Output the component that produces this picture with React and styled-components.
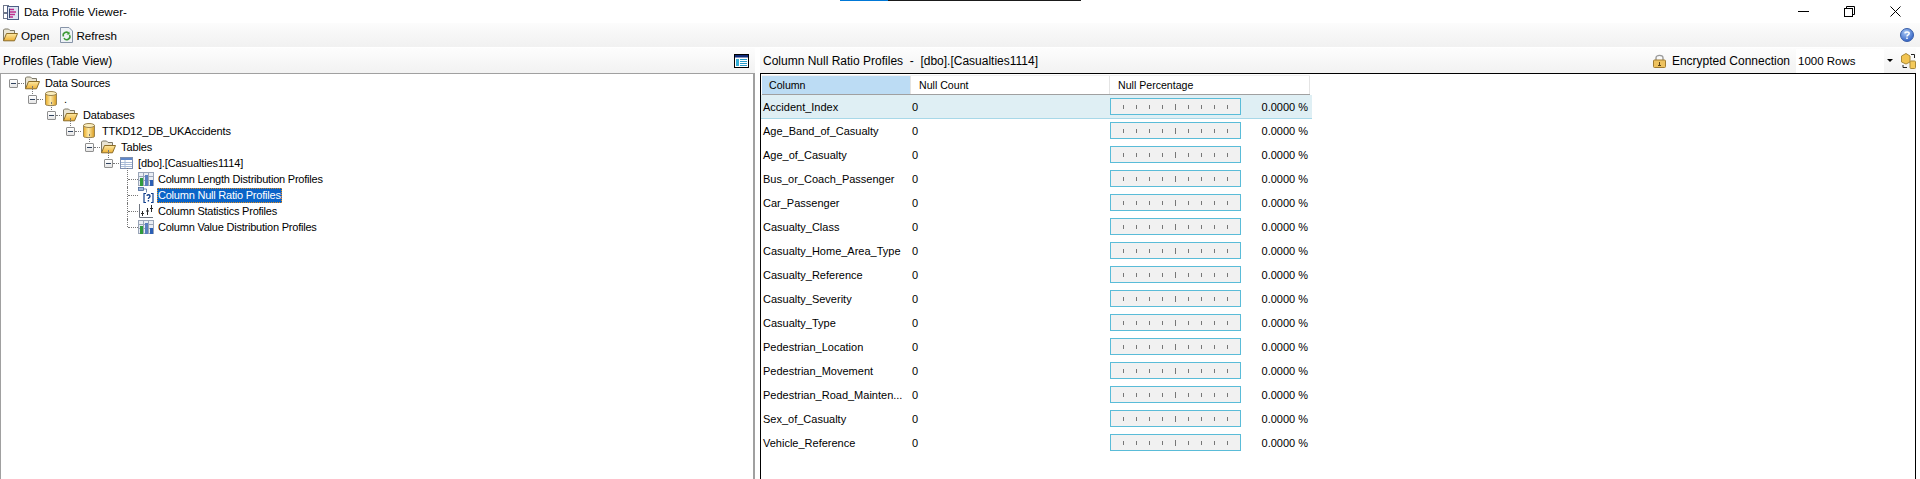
import React from "react";
import styled, { createGlobalStyle } from "styled-components";

const Global = createGlobalStyle`
  html, body { margin: 0; padding: 0; background: #fff; }
  body { font-family: "Liberation Sans", Arial, sans-serif; font-size: 11px; color: #000; }
`;

const Page = styled.div`
  position: relative;
  display: flex;
  flex-direction: column;
  height: 479px;
  width: 1920px;
  overflow: hidden;
  background: #fff;
`;
const LoadBar = styled.div`
  position: absolute;
  top: 0;
  left: 840px;
  width: 241px;
  height: 1px;
  background: linear-gradient(to right, #0078d7 48px, #1a1a1a 48px);
`;
const TitleBar = styled.div`
  height: 23px;
  display: flex;
  align-items: center;
  padding: 0 19px 0 3px;
  background: #fff;
  font-size: 11.6px;
`;
const TitleText = styled.span`
  margin-left: 5px;
  flex: 1;
`;
const WinButtons = styled.div`
  display: flex;
  align-items: center;
  gap: 35px;
`;
const Toolbar = styled.div`
  height: 24px;
  margin-bottom: 1px;
  display: flex;
  align-items: center;
  padding: 0 6px 0 2px;
  background: linear-gradient(to bottom, #fcfcfc, #f1f1f1);
`;
const ToolButton = styled.div`
  display: flex;
  align-items: center;
  gap: ${p => p.$gap}px;
  margin-right: 11px;
  font-size: 11.6px;
`;
const Spacer = styled.div`flex: 1;`;
const Panes = styled.div`
  flex: 1;
  display: flex;
  min-height: 0;
  background: #fff;
`;
const LeftPane = styled.div`
  width: 755px;
  display: flex;
  flex-direction: column;
`;
const Splitter = styled.div`
  width: 5px;
  background: #fff;
`;
const RightPane = styled.div`
  width: 1156px;
  display: flex;
  flex-direction: column;
`;
const PaneHeader = styled.div`
  height: 25px;
  flex: none;
  display: flex;
  align-items: center;
  padding: ${p => p.$pad || "0 6px 0 3px"};
  background: linear-gradient(to bottom, #fdfdfd, #f2f2f2);
  font-size: 12px;
  box-sizing: border-box;
`;
const TreeBox = styled.div`
  flex: 1;
  border-top: 1px solid #a0a0a0;
  border-left: 1px solid #a0a0a0;
  border-right: 2px solid #a0a0a0;
  padding-top: 1px;
  background: #fff;
`;
const TreeRow = styled.div`
  position: relative;
  height: 16px;
  display: flex;
  align-items: center;
  font-size: 11px;
  letter-spacing: ${p => (p.$leaf ? "-0.22px" : "-0.12px")};
  white-space: nowrap;
  padding-left: ${p => p.$left}px;
`;
const Expander = styled.span`
  position: relative;
  width: 9px;
  height: 9px;
  box-sizing: border-box;
  border: 1px solid #8f8f8f;
  border-radius: 1px;
  background: linear-gradient(to bottom, #fff, #e6e6e6);
  flex: none;
  margin-right: 6px;
  &::after {
    content: "";
    position: absolute;
    left: 1px;
    right: 1px;
    top: 3px;
    height: 1px;
    background: #30435f;
  }
`;
const HLink = styled.span`
  position: absolute;
  top: 8px;
  left: ${p => p.$left}px;
  width: ${p => p.$width}px;
  border-top: 1px dotted #777;
`;
const VLink = styled.span`
  position: absolute;
  top: ${p => p.$top}px;
  left: ${p => p.$left}px;
  height: ${p => p.$height}px;
  border-left: 1px dotted #777;
`;
const NodeIcon = styled.span`
  display: flex;
  flex: none;
  align-items: center;
  justify-content: center;
  width: 16px;
  margin-right: ${p => p.$gap}px;
`;
const NodeLabel = styled.span`
  padding: 0 1px;
  height: 15px;
  line-height: 15px;
  box-sizing: border-box;
  ${p => p.$selected && `
    background: #0a64c8;
    color: #fff;
    outline: 1px dotted #e08a1e;
    outline-offset: -1px;
  `}
`;
const HeaderIconWrap = styled.div`
  margin-left: auto;
  display: flex;
`;
const RightTitle = styled.span`
  flex: 1;
  white-space: pre;
`;
const Encrypted = styled.span`
  margin: 0 6px 0 6px;
`;
const Combo = styled.div`
  width: 88px;
  height: 24px;
  background: #fff;
  display: flex;
  align-items: center;
  padding-left: 2px;
  box-sizing: border-box;
  font-size: 11.5px;
`;
const ComboArrow = styled.div`
  width: 12px;
  height: 24px;
  display: flex;
  align-items: center;
  justify-content: center;
  margin-right: 5px;
  &::after {
    content: "";
    border-left: 3px solid transparent;
    border-right: 3px solid transparent;
    border-top: 3px solid #000;
  }
`;
const GridBox = styled.div`
  flex: 1;
  border-top: 1px solid #000;
  border-left: 1px solid #000;
  border-right: 1px solid #000;
  padding-top: 1px;
  background: #fff;
`;
const HeaderRow = styled.div`
  display: flex;
  height: 20px;
  width: 548px;
  margin-left: 1px;
  box-sizing: border-box;
  border-bottom: 1px solid #a0a0a0;
  border-top: 1px solid #f0f0f0;
  font-size: 10.6px;
`;
const HeaderCell = styled.div`
  width: ${p => p.$width}px;
  box-sizing: border-box;
  display: flex;
  align-items: center;
  padding-left: ${p => p.$pad}px;
  border-right: 1px solid #e4e4e4;
  background: ${p => (p.$active ? "#bcdcf4" : "#fff")};
`;
const DataRow = styled.div`
  display: flex;
  align-items: center;
  height: 24px;
  width: 551px;
  box-sizing: border-box;
  font-size: 11px;
  background: ${p => (p.$active ? "#dfeff4" : "#fff")};
  border-bottom: 1px solid ${p => (p.$active ? "#a8d8e8" : "transparent")};
`;
const NameCell = styled.div`
  width: 151px;
  padding-left: 2px;
  box-sizing: border-box;
  overflow: hidden;
  white-space: nowrap;
`;
const CountCell = styled.div`
  width: 198px;
`;
const ProgressBar = styled.div`
  width: 131px;
  height: 17px;
  box-sizing: border-box;
  border: 1px solid #5abcd8;
  background: #f1f1f1;
  display: flex;
  align-items: center;
  justify-content: space-between;
  padding: 0 12px;
`;
const Tick = styled.span`
  width: 1px;
  height: ${p => (p.$tall ? 6 : 4)}px;
  background: #777;
`;
const Pct = styled.div`
  width: 67px;
  text-align: right;
`;

/* ---------- icons ---------- */
const FolderOpen = () => (
  <svg width="16" height="14" viewBox="0 0 16 14">
    <defs>
      <linearGradient id="fld" x1="0" x2="0" y1="0" y2="1">
        <stop offset="0" stopColor="#fde9a4" />
        <stop offset="1" stopColor="#eeb032" />
      </linearGradient>
    </defs>
    <path d="M1.5 12.5V2L2.5 1H6.5L8 2.5H12.5V5" fill="#e9e4d2" stroke="#7c7868" />
    <path d="M1.5 12.8L4.5 5.5H15.5L12.5 12.8Z" fill="url(#fld)" stroke="#8b6c28" />
  </svg>
);
const Cylinder = () => (
  <svg width="12" height="16" viewBox="0 0 12 16">
    <defs>
      <linearGradient id="cyl" x1="0" x2="1" y1="0" y2="0">
        <stop offset="0" stopColor="#e8a922" />
        <stop offset=".45" stopColor="#fde9a8" />
        <stop offset="1" stopColor="#d89a1c" />
      </linearGradient>
    </defs>
    <path d="M.5 2.5V13.5C.5 15 11.5 15 11.5 13.5V2.5Z" fill="url(#cyl)" stroke="#9a8350" />
    <ellipse cx="6" cy="2.5" rx="5.5" ry="2" fill="#fbeebd" stroke="#9a8350" />
  </svg>
);
const TableIcon = () => (
  <svg width="16" height="13" viewBox="0 0 16 13">
    <rect x="1.5" y=".5" width="12" height="11" fill="#fff" stroke="#7d8fb0" />
    <rect x="2" y="1" width="11" height="2" fill="#5f86c8" />
    <path d="M2 5.5H13M2 7.5H13M2 9.5H13M6 3V11" stroke="#a9bcd8" />
  </svg>
);
const ChartIcon = () => (
  <svg width="16" height="14" viewBox="0 0 16 14">
    <rect x=".5" y=".5" width="15" height="13" fill="#e9edf4" stroke="#9aa5b8" />
    <path d="M.5 4.5H15.5M.5 8.5H15.5M5.5 .5V13.5M10.5 .5V13.5" stroke="#9aa5b8" />
    <rect x="2" y="6" width="3" height="8" fill="#2f9a3c" />
    <rect x="7" y="3" width="3" height="11" fill="#5a7fc0" />
    <rect x="12" y="8" width="3" height="6" fill="#2b5fb5" />
  </svg>
);
const NullIcon = () => (
  <svg width="16" height="16" viewBox="0 0 16 16">
    <rect x="0.5" y="0.5" width="5" height="3" fill="#9db7dc" stroke="#49689a" strokeWidth=".8" />
    <path d="M5.5 2H8.5V5.5" stroke="#49689a" fill="none" strokeWidth=".8" />
    <path d="M8 6.5H6V15.5H8M13 6.5H15V15.5H13" stroke="#123f8c" fill="none" strokeWidth="1.2" />
    <path d="M8.8 8.8C9.2 7.4 12 7.4 12 9.2C12 10.6 10.4 10.4 10.4 12M10.4 13V14.6" stroke="#123f8c" fill="none" strokeWidth="1.4" />
  </svg>
);
const StatsIcon = () => (
  <svg width="16" height="16" viewBox="0 0 16 16">
    <path d="M1.5 1V14.5H15" stroke="#6f7580" fill="none" />
    <path d="M4.5 8V13M3 10.5H6M9.5 5V12M8 8H11M13.5 2V9M12 5.5H15" stroke="#2b2b2b" fill="none" />
  </svg>
);
const AppIcon = () => (
  <svg width="16" height="16" viewBox="0 0 16 16">
    <rect x=".5" y="1.5" width="5" height="7" fill="#fff" stroke="#70788c" />
    <rect x=".5" y="9.5" width="4" height="5" fill="#fff" stroke="#70788c" />
    <rect x="4.5" y="2.5" width="11" height="13" fill="#dfe6f4" stroke="#4e5f86" />
    <path d="M7 5.5H11M7 8H13M7 10.5H12M7 13H10" stroke="#c02c8c" strokeWidth="1.4" />
    <path d="M6.5 4.5V14" stroke="#3a4a70" />
  </svg>
);
const RefreshIcon = () => (
  <svg width="13" height="16" viewBox="0 0 13 16">
    <path d="M.5 .5H9L12.5 4V15.5H.5Z" fill="#eef2f6" stroke="#8794a8" />
    <path d="M3.5 9.5A3 3 0 0 1 9 7M9.5 8A3 3 0 0 1 4 11" stroke="#3d9a36" fill="none" strokeWidth="1.5" />
    <path d="M9.5 4.5V7.5H6.5" fill="#3d9a36" />
  </svg>
);
const MinIcon = () => (
  <svg width="11" height="11" viewBox="0 0 11 11">
    <path d="M0 5.5H11" stroke="#000" />
  </svg>
);
const RestoreIcon = () => (
  <svg width="11" height="11" viewBox="0 0 11 11">
    <rect x=".5" y="2.5" width="8" height="8" fill="#fff" stroke="#000" />
    <path d="M2.5 2.5V.5H10.5V8.5H8.5" stroke="#000" fill="none" />
  </svg>
);
const CloseIcon = () => (
  <svg width="11" height="11" viewBox="0 0 11 11">
    <path d="M.5 .5L10.5 10.5M10.5 .5L.5 10.5" stroke="#000" />
  </svg>
);
const HelpIcon = () => (
  <svg width="14" height="14" viewBox="0 0 14 14">
    <defs>
      <radialGradient id="hlp" cx=".4" cy=".3" r=".8">
        <stop offset="0" stopColor="#a8c8f4" />
        <stop offset="1" stopColor="#2456c0" />
      </radialGradient>
    </defs>
    <circle cx="7" cy="7" r="6.5" fill="url(#hlp)" stroke="#3a5fa8" />
    <path d="M4.8 5.4C5 3.4 9.2 3.4 9.2 5.5C9.2 7 7 6.8 7 8.6M7 9.6V11" stroke="#fff" fill="none" strokeWidth="1.5" />
  </svg>
);
const LockIcon = () => (
  <svg width="13" height="14" viewBox="0 0 13 14">
    <path d="M3 6.5V4C3 .5 10 .5 10 4V6.5" stroke="#9a9a9a" fill="none" strokeWidth="1.4" />
    <rect x=".5" y="6" width="12" height="7.5" rx="1" fill="#eec25e" stroke="#a07c32" />
    <path d="M6.5 8V11.5M5 11.5H8" stroke="#5c4313" />
  </svg>
);
const LayoutIcon = () => (
  <svg width="15" height="14" viewBox="0 0 15 14">
    <rect x=".5" y=".5" width="14" height="13" fill="#fff" stroke="#000" />
    <rect x="1" y="1" width="13" height="2.5" fill="#0f2a78" />
    <rect x="2" y="5" width="3" height="7" fill="#35b0d8" />
    <path d="M6 5.5H13M6 7.5H13M6 9.5H13M6 11.5H13" stroke="#2a9cc8" />
  </svg>
);
const TransferIcon = () => (
  <svg width="15" height="16" viewBox="0 0 15 16">
    <path d="M.5 3L5 .5L9 3V9L5 11L.5 9Z" fill="#f2c450" stroke="#a98a3a" />
    <rect x="9" y="8" width="5.5" height="7.5" rx="1" fill="#f4ca5c" stroke="#a98a3a" />
    <path d="M10 1.5H13.5V5M2 12V14.5H6" stroke="#222" fill="none" />
  </svg>
);

/* ---------- data ---------- */
const treeNodes = [
  { label: "Data Sources", exp: 8, icon: <FolderOpen />, gap: 4 },
  { label: ".", exp: 27, icon: <Cylinder />, gap: 4, line: 31 },
  { label: "Databases", exp: 46, icon: <FolderOpen />, gap: 4, line: 50 },
  { label: "TTKD12_DB_UKAccidents", exp: 65, icon: <Cylinder />, gap: 4, line: 69 },
  { label: "Tables", exp: 84, icon: <FolderOpen />, gap: 4, line: 88 },
  { label: "[dbo].[Casualties1114]", exp: 103, icon: <TableIcon />, gap: 2, line: 107 },
  { label: "Column Length Distribution Profiles", icon: <ChartIcon />, first: true },
  { label: "Column Null Ratio Profiles", icon: <NullIcon />, selected: true },
  { label: "Column Statistics Profiles", icon: <StatsIcon /> },
  { label: "Column Value Distribution Profiles", icon: <ChartIcon />, last: true },
];

const rows = [
  "Accident_Index",
  "Age_Band_of_Casualty",
  "Age_of_Casualty",
  "Bus_or_Coach_Passenger",
  "Car_Passenger",
  "Casualty_Class",
  "Casualty_Home_Area_Type",
  "Casualty_Reference",
  "Casualty_Severity",
  "Casualty_Type",
  "Pedestrian_Location",
  "Pedestrian_Movement",
  "Pedestrian_Road_Mainten...",
  "Sex_of_Casualty",
  "Vehicle_Reference",
];
const ticks = [0, 1, 2, 3, 4, 5, 6, 7, 8];

const Node = ({ n }) =>
  n.exp !== undefined ? (
    <TreeRow $left={n.exp}>
      {n.line !== undefined && <VLink $left={n.line} $top={-5} $height={8} />}
      <HLink $left={n.exp + 9} $width={6} />
      <Expander />
      <NodeIcon $gap={n.gap}>{n.icon}</NodeIcon>
      <NodeLabel>{n.label}</NodeLabel>
    </TreeRow>
  ) : (
    <TreeRow $left={137} $leaf>
      <VLink $left={126} $top={n.first ? -3 : 0} $height={n.last ? 8 : n.first ? 19 : 16} />
      <HLink $left={127} $width={10} />
      <NodeIcon $gap={3}>{n.icon}</NodeIcon>
      <NodeLabel $selected={n.selected}>{n.label}</NodeLabel>
    </TreeRow>
  );

export default function App() {
  return (
    <Page>
      <Global />
      <LoadBar />
      <TitleBar>
        <AppIcon />
        <TitleText>Data Profile Viewer-</TitleText>
        <WinButtons>
          <MinIcon />
          <RestoreIcon />
          <CloseIcon />
        </WinButtons>
      </TitleBar>
      <Toolbar>
        <ToolButton $gap={3}><FolderOpen /> Open</ToolButton>
        <ToolButton $gap={3}><RefreshIcon /> Refresh</ToolButton>
        <Spacer />
        <HelpIcon />
      </Toolbar>
      <Panes>
        <LeftPane>
          <PaneHeader>
            Profiles (Table View)
            <HeaderIconWrap><LayoutIcon /></HeaderIconWrap>
          </PaneHeader>
          <TreeBox>
            {treeNodes.map(n => <Node key={n.label} n={n} />)}
          </TreeBox>
        </LeftPane>
        <Splitter />
        <RightPane>
          <PaneHeader $pad="0 0 0 3px">
            <RightTitle>{"Column Null Ratio Profiles  -  [dbo].[Casualties1114]"}</RightTitle>
            <LockIcon />
            <Encrypted>Encrypted Connection</Encrypted>
            <Combo>1000 Rows</Combo>
            <ComboArrow />
            <TransferIcon />
          </PaneHeader>
          <GridBox>
            <HeaderRow>
              <HeaderCell $width={149} $active $pad={7}>Column</HeaderCell>
              <HeaderCell $width={199} $pad={8}>Null Count</HeaderCell>
              <HeaderCell $width={200} $pad={8}>Null Percentage</HeaderCell>
            </HeaderRow>
            {rows.map((r, i) => (
              <DataRow key={r} $active={i === 0}>
                <NameCell>{r}</NameCell>
                <CountCell>0</CountCell>
                <ProgressBar>
                  {ticks.map(t => <Tick key={t} $tall={t === 4} />)}
                </ProgressBar>
                <Pct>0.0000 %</Pct>
              </DataRow>
            ))}
          </GridBox>
        </RightPane>
      </Panes>
    </Page>
  );
}
